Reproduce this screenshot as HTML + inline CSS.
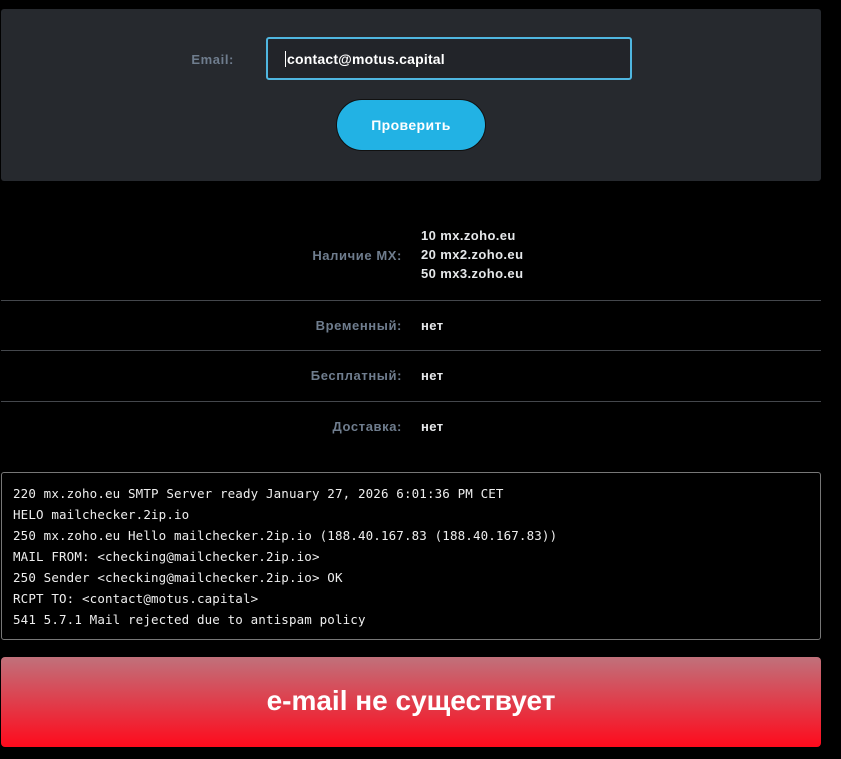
<!DOCTYPE html>
<html><head><meta charset="utf-8"><style>
body{margin:0;background:#000;width:841px;height:759px;overflow:hidden;font-family:"Liberation Sans",sans-serif;}
.panel{position:absolute;left:1px;top:9px;width:820px;height:172px;background:#26292e;border-radius:3px;}
.lbl{position:absolute;color:#6f7d8e;font-weight:bold;font-size:13px;text-align:right;letter-spacing:0.6px}
.inp{position:absolute;left:266px;top:37px;width:362px;height:39px;border:2px solid #4fb6e0;border-radius:3px;background:#222429;box-sizing:content-box;}
.inp span{position:absolute;left:17px;top:12px;color:#fff;font-size:14px;font-weight:bold;border-left:1px solid #fff;padding-left:1px;line-height:16px;letter-spacing:0.2px}
.btn{position:absolute;left:336px;top:99px;width:148px;height:50px;border:1px solid #111;border-radius:26px;background:#22b2e4;color:#fff;font-weight:bold;font-size:14px;text-align:center;line-height:50px;letter-spacing:0.4px}
.sep{position:absolute;left:1px;width:820px;height:1px;background:#44474c;}
.val{position:absolute;left:421px;color:#e6e8ea;font-weight:bold;font-size:13px;letter-spacing:0.4px}
.log{position:absolute;left:1px;top:472px;width:818px;height:166px;border:1px solid #777;border-radius:3px;font-family:"DejaVu Sans Mono","Liberation Mono",monospace;font-size:12.5px;color:#eee;}
.log div{position:absolute;left:11px;white-space:pre;letter-spacing:0.14px}
.res{position:absolute;left:1px;top:657px;width:820px;height:90px;border-radius:4px;background:linear-gradient(#c0717b,#ff0a1c);color:#fff;font-weight:bold;font-size:28px;text-align:center;line-height:88px;letter-spacing:0px}
</style></head><body>
<div class="panel"></div>
<div class="lbl" style="left:130px;top:52px;width:104px">Email:</div>
<div class="inp"><span>contact@motus.capital</span></div>
<div class="btn">Проверить</div>

<div class="lbl" style="left:200px;top:248px;width:202px">Наличие MX:</div>
<div class="val" style="top:228px">10 mx.zoho.eu</div>
<div class="val" style="top:247px">20 mx2.zoho.eu</div>
<div class="val" style="top:266px">50 mx3.zoho.eu</div>
<div class="sep" style="top:300px"></div>
<div class="lbl" style="left:200px;top:318px;width:202px">Временный:</div>
<div class="val" style="top:318px">нет</div>
<div class="sep" style="top:350px"></div>
<div class="lbl" style="left:200px;top:368px;width:202px">Бесплатный:</div>
<div class="val" style="top:368px">нет</div>
<div class="sep" style="top:401px"></div>
<div class="lbl" style="left:200px;top:419px;width:202px">Доставка:</div>
<div class="val" style="top:419px">нет</div>

<div class="log">
<div style="top:13px">220 mx.zoho.eu SMTP Server ready January 27, 2026 6:01:36 PM CET</div>
<div style="top:34px">HELO mailchecker.2ip.io</div>
<div style="top:55px">250 mx.zoho.eu Hello mailchecker.2ip.io (188.40.167.83 (188.40.167.83))</div>
<div style="top:76px">MAIL FROM: &lt;checking@mailchecker.2ip.io&gt;</div>
<div style="top:97px">250 Sender &lt;checking@mailchecker.2ip.io&gt; OK</div>
<div style="top:118px">RCPT TO: &lt;contact@motus.capital&gt;</div>
<div style="top:139px">541 5.7.1 Mail rejected due to antispam policy</div>
</div>
<div class="res">e-mail не существует</div>
</body></html>
